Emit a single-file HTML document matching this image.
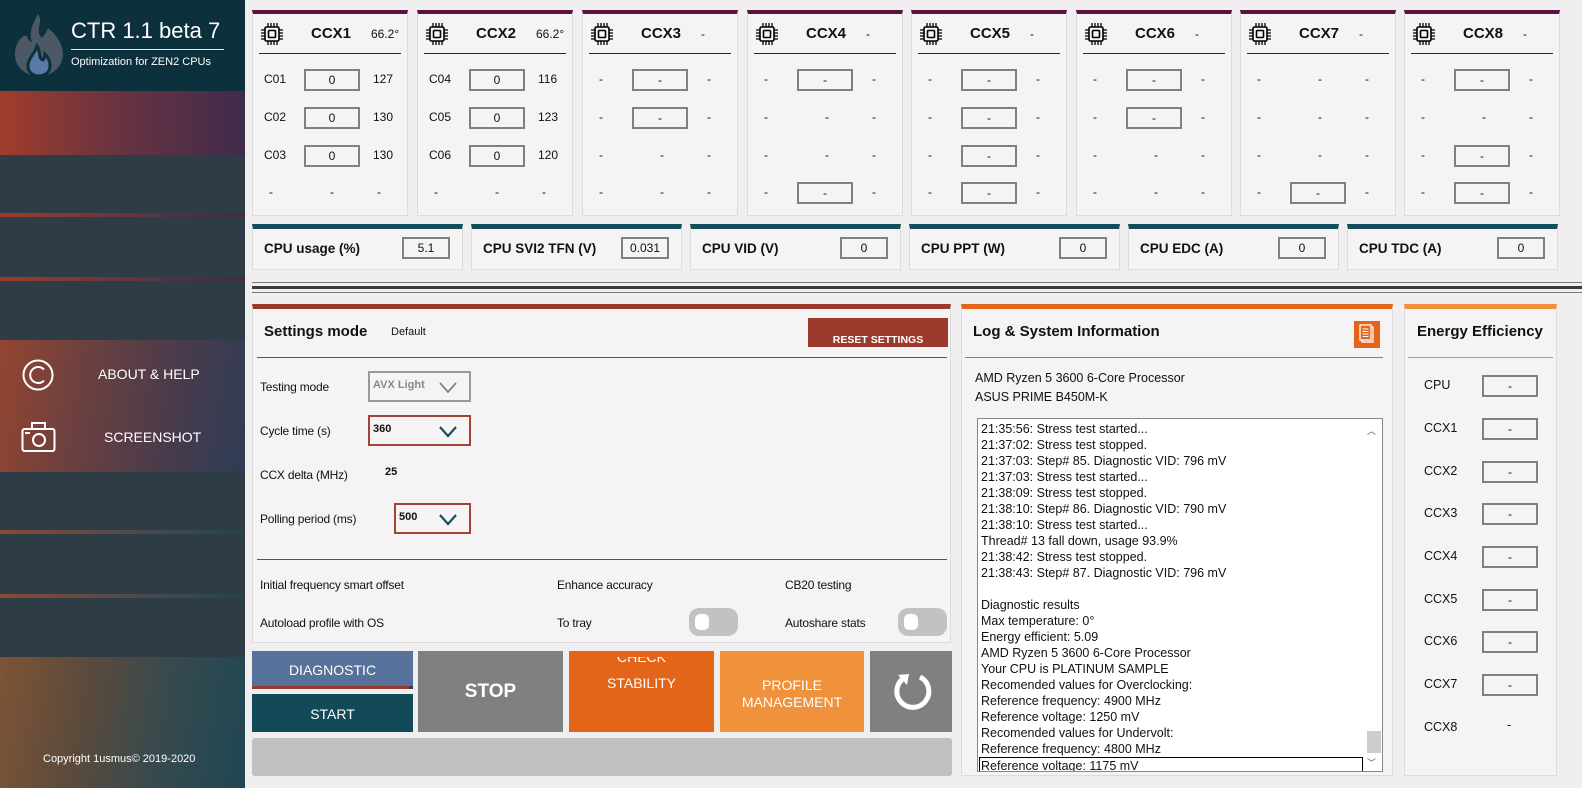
<!DOCTYPE html>
<html><head><meta charset="utf-8">
<style>
*{box-sizing:border-box;margin:0;padding:0}
body{width:1582px;height:788px;position:relative;overflow:hidden;background:#f0eeee;font-family:"Liberation Sans",sans-serif;font-size:13px;color:#111}
.a{position:absolute}
.side{left:0;top:0;width:245px;height:788px;background:#2e3c45}
.ln{height:4px;background:linear-gradient(90deg,#9e3c2b,#5a3445 60%,#3d2c4a)}
.ccx{width:156px;height:206px;top:10px;background:#f5f3f3;border:1px solid #dcdcdc;border-top:4px solid #5c1140}
.ccx .hl{left:6px;right:6px;top:39px;height:1px;background:#4a1433}
.ccx .t{top:11px;left:58px;font-weight:bold;font-size:15px}
.ccx .tp{top:13px;left:118px;font-size:12px}
.ccx svg{position:absolute;left:7px;top:8px}
.r{font-size:12px}
.bx{width:56px;height:22px;border:2px solid #808080;background:#f5f3f3;text-align:center;font-size:12px;line-height:18px}
.st{top:224px;width:211px;height:46px;background:#f5f3f3;border:1px solid #dcdcdc;border-top:5px solid #134e5a}
.st b{position:absolute;left:11px;top:12px;font-size:13.5px}
.st .bx{position:absolute;top:8px;right:12px;width:48px;height:22px;line-height:18px}
.pn{background:#f5f3f3;border:1px solid #dcdcdc}
.dd{width:103px;height:31px;border:2px solid #a0443a;background:#f5f3f3;font-size:11px;font-weight:bold;padding:6px 0 0 3px}
.dd svg{position:absolute;right:12px;top:9px}
.tg{width:49px;height:28px;border-radius:10px;background:#c2c2c2}
.tg i{position:absolute;left:6px;top:6px;width:14px;height:16px;border-radius:5px;background:#fff}
.btn{top:651px;height:81px;color:#fff;text-align:center;font-size:14px}
.log div{height:16px;line-height:16px;font-size:12.5px;white-space:nowrap}
.ee{font-size:12.5px}
.sl{font-size:12px;letter-spacing:-0.2px}
</style></head><body>
<div class="a side">
 <div class="a" style="left:0;top:0;width:245px;height:91px;background:#0d303d"></div>
 <svg class="a" style="left:14px;top:12px" width="50" height="64" viewBox="0 0 50 64"><path d="M24 2 C30 10 20 18 28 26 C32 22 33 18 34 16 C44 24 49 34 49 42 C49 55 38 64 25 64 C11 64 1 55 1 42 C1 32 8 22 13 24 C14 28 16 30 18 30 C14 20 20 10 24 2Z" fill="#4c5965"/><path d="M23 34 C27 40 24 46 29 48 C31 46 31 43 31 42 C35 46 36 50 36 54 C36 60 31 64 25 64 C19 64 14 60 14 54 C14 46 21 42 23 34Z" fill="#5b79a8" stroke="#0d303d" stroke-width="3"/></svg>
 <div class="a" style="left:71px;top:18px;color:#fff;font-size:22px">CTR 1.1 beta 7</div>
 <div class="a" style="left:71px;top:49px;width:153px;height:1px;background:#e8e8e8"></div>
 <div class="a" style="left:71px;top:56px;color:#fff;font-size:11px">Optimization for ZEN2 CPUs</div>
 <div class="a" style="left:0;top:91px;width:245px;height:64px;background:linear-gradient(90deg,#a13c2c,#6b3440 45%,#3f2b4b)"></div>
 <div class="a ln" style="left:0;top:213px;width:245px"></div>
 <div class="a ln" style="left:0;top:277px;width:245px"></div>
 <div class="a" style="left:0;top:340px;width:245px;height:132px;background:linear-gradient(100deg,#944530,#6a4040 35%,#483b4c 70%,#2e3c55)"></div>
 <svg class="a" style="left:21px;top:358px" width="34" height="34" viewBox="0 0 34 34"><circle cx="17" cy="17" r="14.5" fill="none" stroke="#fff" stroke-width="2"/><path d="M23 11.5 A8 8 0 1 0 23 22.5" fill="none" stroke="#fff" stroke-width="2"/></svg>
 <div class="a" style="left:98px;top:366px;color:#fff;font-size:14px">ABOUT &amp; HELP</div>
 <svg class="a" style="left:21px;top:421px" width="36" height="32" viewBox="0 0 36 32"><rect x="1.5" y="8" width="32" height="22" rx="2" fill="none" stroke="#fff" stroke-width="2"/><rect x="11" y="2" width="13" height="6" fill="none" stroke="#fff" stroke-width="2"/><circle cx="18" cy="19" r="6" fill="none" stroke="#fff" stroke-width="2"/><line x1="4" y1="12" x2="9" y2="12" stroke="#fff" stroke-width="2"/></svg>
 <div class="a" style="left:104px;top:429px;color:#fff;font-size:14px">SCREENSHOT</div>
 <div class="a ln" style="left:0;top:530px;width:245px;background:linear-gradient(90deg,#8a4a35,#3d4a52 70%,#234350)"></div>
 <div class="a ln" style="left:0;top:594px;width:245px;background:linear-gradient(90deg,#8a4a35,#3d4a52 70%,#234350)"></div>
 <div class="a" style="left:0;top:657px;width:245px;height:131px;background:linear-gradient(100deg,#7e5436,#5a4a3c 35%,#374a4e 65%,#1f4652)"></div>
 <div class="a" style="left:43px;top:753px;color:#fff;font-size:11px">Copyright 1usmus© 2019-2020</div>
</div>

<svg width="0" height="0" style="position:absolute"><defs><g id="chip"><rect x="5" y="5" width="14" height="14" rx="1.5" fill="none" stroke="#000" stroke-width="1.6"/><rect x="8.5" y="8.5" width="7" height="7" rx="1" fill="none" stroke="#000" stroke-width="1.6"/><path d="M8 1v4M11 1v4M14 1v4M17 1v4M8 19v4M11 19v4M14 19v4M17 19v4M1 8h4M1 11h4M1 14h4M1 17h4M19 8h4M19 11h4M19 14h4M19 17h4" stroke="#000" stroke-width="1.3"/></g></defs></svg>

<div class="a ccx" style="left:252px"><svg width="24" height="24"><use href="#chip"/></svg><div class="a t">CCX1</div><div class="a tp">66.2°</div><div class="a hl"></div>
<div class="a r" style="left:11px;top:58px">C01</div><div class="a bx" style="left:51px;top:55px">0</div><div class="a r" style="left:120px;top:58px">127</div>
<div class="a r" style="left:11px;top:96px">C02</div><div class="a bx" style="left:51px;top:93px">0</div><div class="a r" style="left:120px;top:96px">130</div>
<div class="a r" style="left:11px;top:134px">C03</div><div class="a bx" style="left:51px;top:131px">0</div><div class="a r" style="left:120px;top:134px">130</div>
<div class="a r" style="left:16px;top:171px">-</div><div class="a r" style="left:77px;top:171px">-</div><div class="a r" style="left:124px;top:171px">-</div></div>

<div class="a ccx" style="left:417px"><svg width="24" height="24"><use href="#chip"/></svg><div class="a t">CCX2</div><div class="a tp">66.2°</div><div class="a hl"></div>
<div class="a r" style="left:11px;top:58px">C04</div><div class="a bx" style="left:51px;top:55px">0</div><div class="a r" style="left:120px;top:58px">116</div>
<div class="a r" style="left:11px;top:96px">C05</div><div class="a bx" style="left:51px;top:93px">0</div><div class="a r" style="left:120px;top:96px">123</div>
<div class="a r" style="left:11px;top:134px">C06</div><div class="a bx" style="left:51px;top:131px">0</div><div class="a r" style="left:120px;top:134px">120</div>
<div class="a r" style="left:16px;top:171px">-</div><div class="a r" style="left:77px;top:171px">-</div><div class="a r" style="left:124px;top:171px">-</div></div>

<div class="a ccx" style="left:582px"><svg width="24" height="24"><use href="#chip"/></svg><div class="a t">CCX3</div><div class="a tp">-</div><div class="a hl"></div>
<div class="a r" style="left:16px;top:58px">-</div><div class="a bx" style="left:49px;top:55px">-</div><div class="a r" style="left:124px;top:58px">-</div>
<div class="a r" style="left:16px;top:96px">-</div><div class="a bx" style="left:49px;top:93px">-</div><div class="a r" style="left:124px;top:96px">-</div>
<div class="a r" style="left:16px;top:134px">-</div><div class="a r" style="left:77px;top:134px">-</div><div class="a r" style="left:124px;top:134px">-</div>
<div class="a r" style="left:16px;top:171px">-</div><div class="a r" style="left:77px;top:171px">-</div><div class="a r" style="left:124px;top:171px">-</div></div>

<div class="a ccx" style="left:747px"><svg width="24" height="24"><use href="#chip"/></svg><div class="a t">CCX4</div><div class="a tp">-</div><div class="a hl"></div>
<div class="a r" style="left:16px;top:58px">-</div><div class="a bx" style="left:49px;top:55px">-</div><div class="a r" style="left:124px;top:58px">-</div>
<div class="a r" style="left:16px;top:96px">-</div><div class="a r" style="left:77px;top:96px">-</div><div class="a r" style="left:124px;top:96px">-</div>
<div class="a r" style="left:16px;top:134px">-</div><div class="a r" style="left:77px;top:134px">-</div><div class="a r" style="left:124px;top:134px">-</div>
<div class="a r" style="left:16px;top:171px">-</div><div class="a bx" style="left:49px;top:168px">-</div><div class="a r" style="left:124px;top:171px">-</div></div>

<div class="a ccx" style="left:911px"><svg width="24" height="24"><use href="#chip"/></svg><div class="a t">CCX5</div><div class="a tp">-</div><div class="a hl"></div>
<div class="a r" style="left:16px;top:58px">-</div><div class="a bx" style="left:49px;top:55px">-</div><div class="a r" style="left:124px;top:58px">-</div>
<div class="a r" style="left:16px;top:96px">-</div><div class="a bx" style="left:49px;top:93px">-</div><div class="a r" style="left:124px;top:96px">-</div>
<div class="a r" style="left:16px;top:134px">-</div><div class="a bx" style="left:49px;top:131px">-</div><div class="a r" style="left:124px;top:134px">-</div>
<div class="a r" style="left:16px;top:171px">-</div><div class="a bx" style="left:49px;top:168px">-</div><div class="a r" style="left:124px;top:171px">-</div></div>

<div class="a ccx" style="left:1076px"><svg width="24" height="24"><use href="#chip"/></svg><div class="a t">CCX6</div><div class="a tp">-</div><div class="a hl"></div>
<div class="a r" style="left:16px;top:58px">-</div><div class="a bx" style="left:49px;top:55px">-</div><div class="a r" style="left:124px;top:58px">-</div>
<div class="a r" style="left:16px;top:96px">-</div><div class="a bx" style="left:49px;top:93px">-</div><div class="a r" style="left:124px;top:96px">-</div>
<div class="a r" style="left:16px;top:134px">-</div><div class="a r" style="left:77px;top:134px">-</div><div class="a r" style="left:124px;top:134px">-</div>
<div class="a r" style="left:16px;top:171px">-</div><div class="a r" style="left:77px;top:171px">-</div><div class="a r" style="left:124px;top:171px">-</div></div>

<div class="a ccx" style="left:1240px"><svg width="24" height="24"><use href="#chip"/></svg><div class="a t">CCX7</div><div class="a tp">-</div><div class="a hl"></div>
<div class="a r" style="left:16px;top:58px">-</div><div class="a r" style="left:77px;top:58px">-</div><div class="a r" style="left:124px;top:58px">-</div>
<div class="a r" style="left:16px;top:96px">-</div><div class="a r" style="left:77px;top:96px">-</div><div class="a r" style="left:124px;top:96px">-</div>
<div class="a r" style="left:16px;top:134px">-</div><div class="a r" style="left:77px;top:134px">-</div><div class="a r" style="left:124px;top:134px">-</div>
<div class="a r" style="left:16px;top:171px">-</div><div class="a bx" style="left:49px;top:168px">-</div><div class="a r" style="left:124px;top:171px">-</div></div>

<div class="a ccx" style="left:1404px"><svg width="24" height="24"><use href="#chip"/></svg><div class="a t">CCX8</div><div class="a tp">-</div><div class="a hl"></div>
<div class="a r" style="left:16px;top:58px">-</div><div class="a bx" style="left:49px;top:55px">-</div><div class="a r" style="left:124px;top:58px">-</div>
<div class="a r" style="left:16px;top:96px">-</div><div class="a r" style="left:77px;top:96px">-</div><div class="a r" style="left:124px;top:96px">-</div>
<div class="a r" style="left:16px;top:134px">-</div><div class="a bx" style="left:49px;top:131px">-</div><div class="a r" style="left:124px;top:134px">-</div>
<div class="a r" style="left:16px;top:171px">-</div><div class="a bx" style="left:49px;top:168px">-</div><div class="a r" style="left:124px;top:171px">-</div></div>

<div class="a st" style="left:252px"><b>CPU usage (%)</b><div class="bx">5.1</div></div>
<div class="a st" style="left:471px"><b>CPU SVI2 TFN (V)</b><div class="bx">0.031</div></div>
<div class="a st" style="left:690px"><b>CPU VID (V)</b><div class="bx">0</div></div>
<div class="a st" style="left:909px"><b>CPU PPT (W)</b><div class="bx">0</div></div>
<div class="a st" style="left:1128px"><b>CPU EDC (A)</b><div class="bx">0</div></div>
<div class="a st" style="left:1347px"><b>CPU TDC (A)</b><div class="bx">0</div></div>

<div class="a" style="left:252px;top:282px;width:1330px;height:1px;background:#777"></div>
<div class="a" style="left:252px;top:286px;width:1330px;height:3px;background:#3a3a3a"></div>
<div class="a" style="left:252px;top:292px;width:1330px;height:1px;background:#777"></div>

<div class="a pn" style="left:252px;top:304px;width:699px;height:339px;border-top:5px solid #9b3a2c">
 <div class="a" style="left:11px;top:14px;font-weight:bold;font-size:15px">Settings mode</div>
 <div class="a" style="left:138px;top:17px;font-size:11px">Default</div>
 <div class="a" style="left:555px;top:9px;width:140px;height:29px;background:#9b3a2c;color:#fff;font-size:10.5px;font-weight:bold;text-align:center;padding-top:16px">RESET SETTINGS</div>
 <div class="a" style="left:4px;top:48px;width:690px;height:1px;background:#9b3a2c"></div>
 <div class="a sl" style="left:7px;top:71px">Testing mode</div>
 <div class="a dd" style="left:115px;top:62px;border-color:#999;color:#888">AVX Light<svg width="18" height="12"><path d="M1 1l8 9 8-9" fill="none" stroke="#777" stroke-width="1.6"/></svg></div>
 <div class="a sl" style="left:7px;top:115px">Cycle time (s)</div>
 <div class="a dd" style="left:115px;top:106px">360<svg width="18" height="12"><path d="M1 1l8 9 8-9" fill="none" stroke="#134e5a" stroke-width="2.2"/></svg></div>
 <div class="a sl" style="left:7px;top:159px">CCX delta (MHz)</div>
 <div class="a" style="left:132px;top:157px;font-size:11px;font-weight:bold">25</div>
 <div class="a sl" style="left:7px;top:203px">Polling period (ms)</div>
 <div class="a dd" style="left:141px;top:194px;width:77px">500<svg width="18" height="12"><path d="M1 1l8 9 8-9" fill="none" stroke="#134e5a" stroke-width="2.2"/></svg></div>
 <div class="a" style="left:4px;top:250px;width:690px;height:1px;background:#9b3a2c"></div>
 <div class="a sl" style="left:7px;top:269px">Initial frequency smart offset</div>
 <div class="a sl" style="left:304px;top:269px">Enhance accuracy</div>
 <div class="a sl" style="left:532px;top:269px">CB20 testing</div>
 <div class="a sl" style="left:7px;top:307px">Autoload profile with OS</div>
 <div class="a sl" style="left:304px;top:307px">To tray</div>
 <div class="a tg" style="left:436px;top:299px"><i></i></div>
 <div class="a sl" style="left:532px;top:307px">Autoshare stats</div>
 <div class="a tg" style="left:645px;top:299px"><i></i></div>
</div>

<div class="a btn" style="left:252px;top:651px;width:161px;height:35px;background:#57729a;padding-top:11px">DIAGNOSTIC</div>
<div class="a" style="left:252px;top:686px;width:157px;height:3px;background:#9b3a2c"></div>
<div class="a" style="left:409px;top:686px;width:4px;height:3px;background:#2e3c55"></div>
<div class="a btn" style="left:252px;top:694px;width:161px;height:38px;background:#134a5a;padding-top:12px">START</div>
<div class="a btn" style="left:418px;width:145px;background:#808080;font-size:19px;font-weight:bold;padding-top:30px">STOP</div>
<div class="a btn" style="left:569px;width:145px;background:#e2651a;padding-top:24px;overflow:hidden"><div class="a" style="left:0;right:0;top:6px;height:8px;overflow:hidden"><div style="margin-top:-8px">CHECK</div></div>STABILITY</div>
<div class="a btn" style="left:720px;width:144px;background:#f0913c;padding-top:26px;line-height:17px">PROFILE<br>MANAGEMENT</div>
<div class="a btn" style="left:870px;width:82px;background:#808080"><svg class="a" style="left:20px;top:20px" width="44" height="44" viewBox="0 0 44 44"><path d="M30 6 A16 16 0 1 1 14 7" fill="none" stroke="#fff" stroke-width="5"/><path d="M8 4 L19 3 L17 14Z" fill="#fff"/></svg></div>
<div class="a" style="left:252px;top:738px;width:700px;height:38px;background:#c0c0c0;border-radius:3px"></div>

<div class="a pn" style="left:961px;top:304px;width:432px;height:472px;border-top:5px solid #e2651b">
 <div class="a" style="left:11px;top:14px;font-weight:bold;font-size:15px">Log &amp; System Information</div>
 <div class="a" style="left:392px;top:12px;width:26px;height:27px;background:#e2651b"><svg width="26" height="27"><rect x="8" y="6" width="11" height="15" fill="none" stroke="#fff" stroke-width="1.3"/><rect x="6" y="4" width="11" height="15" fill="#e2651b" stroke="#fff" stroke-width="1.3"/><path d="M8.5 8h6M8.5 10.5h6M8.5 13h6M8.5 15.5h6" stroke="#fff"/></svg></div>
 <div class="a" style="left:3px;top:48px;width:418px;height:1px;background:#e2651b"></div>
 <div class="a" style="left:13px;top:62px;font-size:12.5px">AMD Ryzen 5 3600 6-Core Processor</div>
 <div class="a" style="left:13px;top:81px;font-size:12.5px">ASUS PRIME B450M-K</div>
 <div class="a log" style="left:15px;top:109px;width:406px;height:354px;background:#fff;border:1px solid #888;overflow:hidden;padding:2px 0 0 3px">
  <div>21:35:56: Stress test started...</div>
  <div>21:37:02: Stress test stopped.</div>
  <div>21:37:03: Step# 85. Diagnostic VID: 796 mV</div>
  <div>21:37:03: Stress test started...</div>
  <div>21:38:09: Stress test stopped.</div>
  <div>21:38:10: Step# 86. Diagnostic VID: 790 mV</div>
  <div>21:38:10: Stress test started...</div>
  <div>Thread# 13 fall down, usage 93.9%</div>
  <div>21:38:42: Stress test stopped.</div>
  <div>21:38:43: Step# 87. Diagnostic VID: 796 mV</div>
  <div></div>
  <div>Diagnostic results</div>
  <div>Max temperature: 0°</div>
  <div>Energy efficient: 5.09</div>
  <div>AMD Ryzen 5 3600 6-Core Processor</div>
  <div>Your CPU is PLATINUM SAMPLE</div>
  <div>Recomended values for Overclocking:</div>
  <div>Reference frequency: 4900 MHz</div>
  <div>Reference voltage: 1250 mV</div>
  <div>Recomended values for Undervolt:</div>
  <div>Reference frequency: 4800 MHz</div>
  <div style="border:1px solid #000;width:384px;margin-left:-2px;padding-left:1px">Reference voltage: 1175 mV</div>
  <div class="a" style="right:0;top:0;width:17px;height:352px;background:#fff"></div>
  <div class="a" style="right:6px;top:4px;font-size:9px;color:#555">︿</div>
  <div class="a" style="right:1px;top:312px;width:14px;height:22px;background:#cdcdcd"></div>
  <div class="a" style="right:6px;top:336px;font-size:9px;color:#555">﹀</div>
 </div>
</div>

<div class="a pn" style="left:1404px;top:304px;width:153px;height:472px;border-top:5px solid #f0913a">
 <div class="a" style="left:12px;top:14px;font-weight:bold;font-size:15px">Energy Efficiency</div>
 <div class="a" style="left:3px;top:48px;width:145px;height:1px;background:#f0913a"></div>
 <div class="a ee" style="left:19px;top:69px">CPU</div><div class="a bx" style="left:77px;top:66px">-</div>
 <div class="a ee" style="left:19px;top:112px">CCX1</div><div class="a bx" style="left:77px;top:109px">-</div>
 <div class="a ee" style="left:19px;top:155px">CCX2</div><div class="a bx" style="left:77px;top:152px">-</div>
 <div class="a ee" style="left:19px;top:197px">CCX3</div><div class="a bx" style="left:77px;top:194px">-</div>
 <div class="a ee" style="left:19px;top:240px">CCX4</div><div class="a bx" style="left:77px;top:237px">-</div>
 <div class="a ee" style="left:19px;top:283px">CCX5</div><div class="a bx" style="left:77px;top:280px">-</div>
 <div class="a ee" style="left:19px;top:325px">CCX6</div><div class="a bx" style="left:77px;top:322px">-</div>
 <div class="a ee" style="left:19px;top:368px">CCX7</div><div class="a bx" style="left:77px;top:365px">-</div>
 <div class="a ee" style="left:19px;top:411px">CCX8</div><div class="a ee" style="left:102px;top:409px">-</div>
</div>
</body></html>
